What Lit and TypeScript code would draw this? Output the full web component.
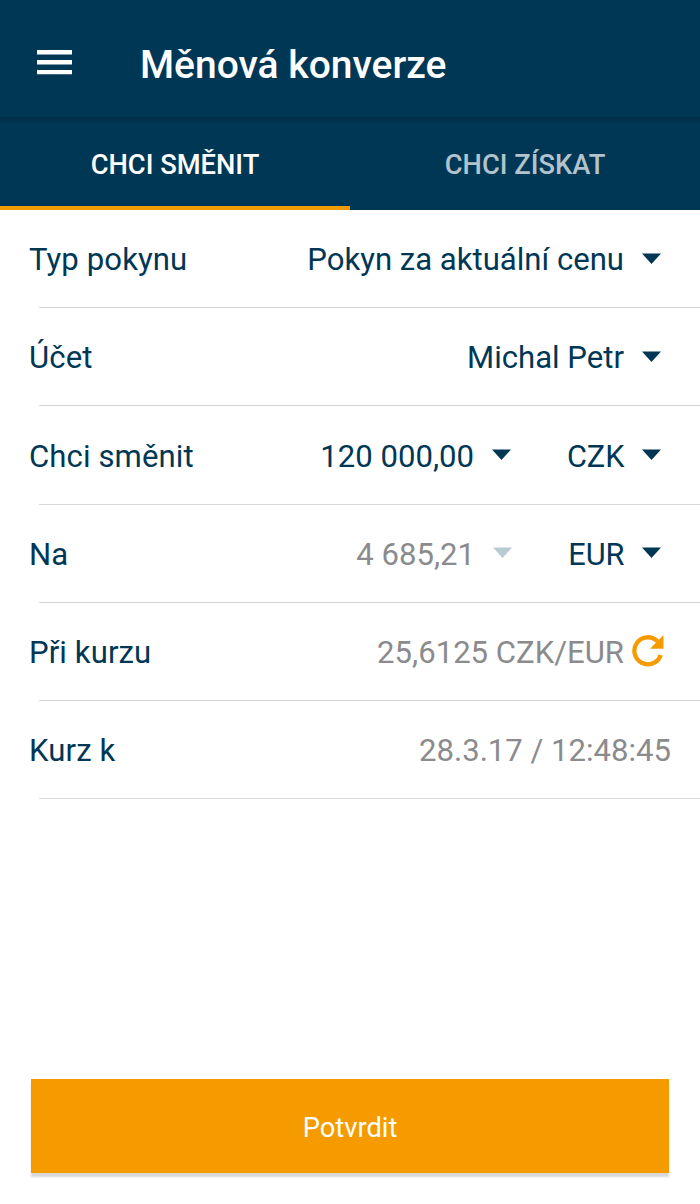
import { LitElement, html, css } from "lit";
import { customElement } from "lit/decorators.js";

@customElement("app-root")
export class AppRoot extends LitElement {
  static styles = css`
    :host { display: flex; flex-direction: column; height: 1204px; background: #fff; color: #003755; font-family: Roboto, sans-serif; font-size: 31.1px; box-sizing: border-box; overflow: hidden; }
    svg { display: block; flex: none; }
    header { height: 117px; flex: none; background: #003755; display: flex; align-items: center; padding: 8px 0 0 37px; box-sizing: border-box; color: #fff; }
    h1 { margin: 5px 0 0 68px; font-size: 39px; font-weight: 500; line-height: 46px; white-space: nowrap; }
    .menu { margin-bottom: 1px; }
    nav { height: 93px; flex: none; display: flex; background: linear-gradient(#002c46, #003755 7px); }
    .tab { flex: 1; display: flex; align-items: center; justify-content: center; padding-top: 6px; font-size: 27.3px; font-weight: 500; color: #b2c3cc; border-bottom: 4px solid transparent; }
    .tab.active { color: #fff; border-color: #f59b00; }
    .row { height: 98.2px; box-sizing: border-box; padding: 1.2px 30px 0 29px; display: flex; align-items: center; white-space: nowrap; }
    .line { height: 1px; margin: -1px 0 0 39px; background: #d8d8d8; }
    .label { flex: 1; letter-spacing: 0.1px; }
    .value { display: flex; align-items: center; }
    .muted { color: #8b8b8d; }
    .arrow { margin: 0 9px 3px 18px; }
    .currency { width: 103px; margin-left: 47px; justify-content: flex-end; font-size: 30.7px; }
    .currency .arrow { margin-left: 17.5px; }
    .muted + .currency { margin-left: 46px; }
    .refresh { margin: 0 5px 2px 8px; }
    .time { margin-right: -1px; }
    .fill { flex: 1; }
    button { height: 94px; flex: none; margin: 0 31px 31px; padding: 4px 0 0; border: 0; background: #f59b00; color: #fff; font: 27.3px Roboto, sans-serif; box-shadow: 0 4px 2px #00000028; }
  `;

  arrow(color = "#003755") {
    return html`<svg class="arrow" width="19" height="11" viewBox="0 0 19 11"><path fill=${color} d="M0 .5H19L9.5 11Z"/></svg>`;
  }

  row(label: string, content: unknown) {
    return html`<div class="row"><span class="label">${label}</span>${content}</div><div class="line"></div>`;
  }

  render() {
    return html`
      <header>
        <svg class="menu" width="35" height="25" viewBox="0 0 35 25"><path fill="#fff" d="M0 0H35V4.6H0ZM0 10H35V14.6H0ZM0 20H35V24.3H0Z"/></svg>
        <h1>Měnová konverze</h1>
      </header>
      <nav><div class="tab active">CHCI SMĚNIT</div><div class="tab">CHCI ZÍSKAT</div></nav>
      <main>
        ${this.row("Typ pokynu", html`<span class="value">Pokyn za aktuální cenu${this.arrow()}</span>`)}
        ${this.row("Účet", html`<span class="value">Michal Petr${this.arrow()}</span>`)}
        ${this.row("Chci směnit", html`<span class="value">120 000,00${this.arrow()}</span><span class="value currency">CZK${this.arrow()}</span>`)}
        ${this.row("Na", html`<span class="value muted">4 685,21${this.arrow("#b9cbd3")}</span><span class="value currency">EUR${this.arrow()}</span>`)}
        ${this.row("Při kurzu", html`<span class="value muted">25,6125 CZK/EUR<svg class="refresh" width="33" height="32" viewBox="0 0 33 32"><path d="M25.5 6.3A13.5 13.5 0 1 0 28.7 20" fill="none" stroke="#f59b00" stroke-width="4.3"/><path fill="#f59b00" d="M31.5 0V13.7H18Z"/></svg></span>`)}
        ${this.row("Kurz k", html`<span class="value muted time">28.3.17 / 12:48:45</span>`)}
      </main>
      <div class="fill"></div>
      <button>Potvrdit</button>
    `;
  }
}
